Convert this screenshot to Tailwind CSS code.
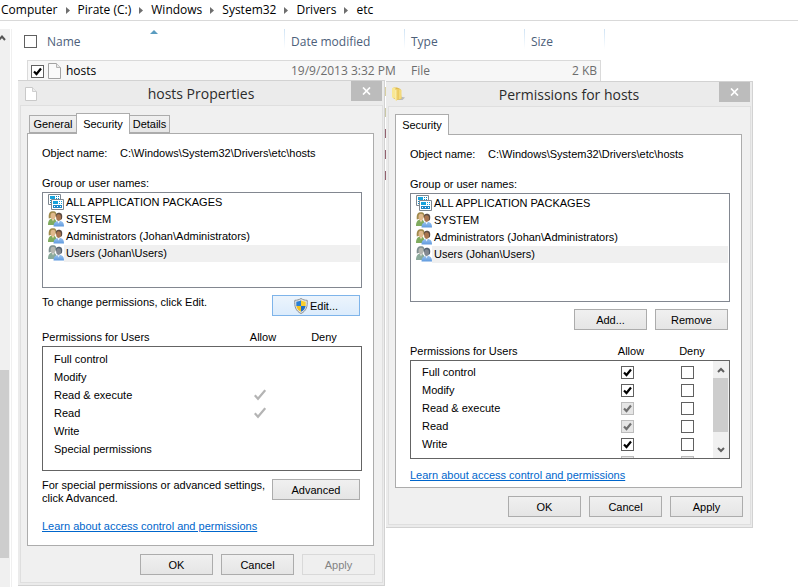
<!DOCTYPE html>
<html lang="en">
<head>
<meta charset="utf-8">
<title>hosts Properties</title>
<script src="https://cdn.jsdelivr.net/npm/@tailwindcss/browser@4"></script>
</head>
<body class="relative flex h-screen flex-col overflow-hidden bg-white font-['Open_Sans',sans-serif] text-xs text-black">

<svg class="absolute size-0" aria-hidden="true">
  <defs>
    <linearGradient id="shirtBlue" x1="0" y1="0" x2="0" y2="1"><stop offset="0" stop-color="#9cc4f0"/><stop offset="1" stop-color="#5f9ade"/></linearGradient>
    <linearGradient id="folderFace" x1="0" y1="0" x2="1" y2="0"><stop offset="0" stop-color="#fdf3b8"/><stop offset="1" stop-color="#e6bf48"/></linearGradient>
    <symbol id="tick" viewBox="0 0 13 13"><path d="M3 6.5 5.5 9 10 3.5" fill="none" stroke="currentColor" stroke-width="2.2"/></symbol>
    <symbol id="tick-plain" viewBox="0 0 12 12"><path d="M.8 6.2 4 9.8 11.2 1.2" fill="none" stroke="currentColor" stroke-width="2.2"/></symbol>
    <symbol id="close" viewBox="0 0 9 8"><path d="M1 .5 8 7.500M8 .5 1 7.500" stroke="#fff" stroke-width="1.7"/></symbol>
    <symbol id="chev-up" viewBox="0 0 8 6"><path d="M1 5 4 2 7 5" fill="none" stroke="#606060" stroke-width="2"/></symbol>
    <symbol id="chev-down" viewBox="0 0 8 6"><path d="M1 1 4 4 7 1" fill="none" stroke="#606060" stroke-width="2"/></symbol>
    <symbol id="crumb" viewBox="0 0 4 7"><path d="M0 0 4 3.500 0 7z" fill="#6e6e6e"/></symbol>
    <symbol id="page" viewBox="0 0 13 16"><path d="M.5.5h8l4 4v11H.5z" fill="#fafafa" stroke="#a2a2a2"/><path d="M8.500.5v4h4" fill="#e8e8e8" stroke="#b4b4b4"/></symbol>
    <symbol id="page-light" viewBox="0 0 12 14"><path d="M.5.5h7l4 4v9H.5z" fill="#fff" stroke="#c9c9c9"/><path d="M7.500.5v4h4" fill="#ececec" stroke="#cfcfcf"/></symbol>
    <symbol id="folder" viewBox="0 0 13 14"><path d="M8 9.500 13 10.500 10.500 13 6 13z" fill="#b9bcc0"/><path d="M1.500.5H5l3.500 1.500L9.500 12 5 13 1 11z" fill="#dfb94a"/><path d="M0 1 3.500.5v11L0 10.500z" fill="#f8e795"/><path d="M3 3 6.500 1.500V12L4 14 3 12.500z" fill="url(#folderFace)"/><path d="M6.500 2 9.500 3V11.500L6.500 12.500z" fill="#f3da7d"/></symbol>
    <symbol id="packages" viewBox="0 0 16 16">
      <path d="M.5.5h12v10H.5z" fill="#fff" stroke="#7e8790"/><path d="M2 2h5v3H2z" fill="#16a3dc"/><path d="M8 2h1v1H8zm2 0h1v1h-1zM8 4h1v1H8zm2 0h1v1h-1zM2 6h1v1H2zm0 2h1v1H2z" fill="#0b86c0"/>
      <path d="M3.500 5.500h12v10h-12z" fill="#fff" stroke="#7e8790"/><path d="M5 7h5v3H5z" fill="#16a3dc"/><path d="M11 7h1v1h-1zm2 0h1v1h-1zm-2 2h1v1h-1zm2 0h1v1h-1z" fill="#16a3dc"/><path d="M5 11h9v3H5z" fill="#1a87c9"/><path d="M6 12h1v1H6zm3 0h1v1H9zm3 0h1v1h-1z" fill="#fff"/>
    </symbol>
    <symbol id="people" viewBox="0 0 16 16">
      <path d="M0 14C0 10 1.500 7.500 4.500 7.500 7 7.500 8.500 9.500 8.500 12l-1 2z" fill="#7fab5e"/><path d="M3.500 7.500 5 10.500 6.500 7.500z" fill="#f0d8b4"/>
      <path d="M.8 7.500C.2 2 2 .3 5 .3s4 2 3.200 5z" fill="#a08a4c"/><ellipse cx="5" cy="5" rx="2.500" ry="3.300" fill="#e0b98c"/>
      <path d="M5.500 15.500C5.500 12 7.500 9.800 11 9.800c3.500 0 5 2.200 5 5.700z" fill="url(#shirtBlue)"/><path d="M9.200 9.800 10.500 12.500 12 9.800z" fill="#eef4fb"/>
      <path d="M8 6C7.300 3 9 1.800 11 1.800c2.700 0 3.700 2.200 3 5.500L13 9z" fill="#5b4a42"/><ellipse cx="10.600" cy="6.600" rx="2.400" ry="3.300" fill="#a8754f"/>
    </symbol>
    <symbol id="people-dim" viewBox="0 0 16 16">
      <path d="M0 14C0 10 1.500 7.500 4.500 7.500 7 7.500 8.500 9.500 8.500 12l-1 2z" fill="#8aaa9a"/><path d="M3.500 7.500 5 10.500 6.500 7.500z" fill="#d8d8d2"/>
      <path d="M.8 7.500C.2 2 2 .3 5 .3s4 2 3.200 5z" fill="#7f9090"/><ellipse cx="5" cy="5" rx="2.500" ry="3.300" fill="#b4b6b0"/>
      <path d="M5.500 15.500C5.500 12 7.500 9.800 11 9.800c3.500 0 5 2.200 5 5.700z" fill="url(#shirtBlue)"/><path d="M9.200 9.800 10.500 12.500 12 9.800z" fill="#dfeaf6"/>
      <path d="M8 6C7.300 3 9 1.800 11 1.800c2.700 0 3.700 2.200 3 5.500L13 9z" fill="#52606f"/><ellipse cx="10.600" cy="6.600" rx="2.400" ry="3.300" fill="#838890"/>
    </symbol>
    <symbol id="shield" viewBox="0 0 14 16">
      <path d="M7 .5C5 1.800 3 2.300.8 2.300.3 8 1.500 13 7 15.500 12.500 13 13.700 8 13.200 2.300 11 2.300 9 1.800 7 .5z" fill="#e3e6e8" stroke="#8b9094"/>
      <path d="M7 2.200C5.500 3.200 4 3.600 2.300 3.700V8H7z" fill="#2a7fd4"/><path d="M7 2.200C8.500 3.200 10 3.600 11.700 3.700V8H7z" fill="#f9cf2d"/>
      <path d="M2.400 8H7v5.800C4.300 12.500 2.800 10.700 2.400 8z" fill="#f5c21b"/><path d="M11.600 8H7v5.800c2.700-1.300 4.200-3.100 4.600-5.800z" fill="#1e6dc4"/>
    </symbol>
  </defs>
</svg>

<nav aria-label="Address" class="flex h-[21px] shrink-0 items-center border-b border-[#d9d9d9] pl-px">
  <a href="#">Computer</a>
  <svg class="mx-2 h-[7px] w-1"><use href="#crumb"/></svg>
  <a href="#">Pirate (C:)</a>
  <svg class="mx-2 h-[7px] w-1"><use href="#crumb"/></svg>
  <a href="#">Windows</a>
  <svg class="mx-2 h-[7px] w-1"><use href="#crumb"/></svg>
  <a href="#">System32</a>
  <svg class="mx-2 h-[7px] w-1"><use href="#crumb"/></svg>
  <a href="#">Drivers</a>
  <svg class="mx-2 h-[7px] w-1"><use href="#crumb"/></svg>
  <a href="#">etc</a>
</nav>

<main class="flex flex-1 pt-2">
  <div class="flex w-[10px] shrink-0 flex-col bg-[#f0f0f0]">
    <svg class="mt-1.5 h-1.5 w-[6px]" viewBox="2 0 6 6"><path d="M1 5 4 1.500 7 5" fill="none" stroke="#555" stroke-width="2"/></svg>
    <div class="mt-[329px] h-[188px] w-[9px] bg-[#cdcdcd]"></div>
  </div>
  <div class="ml-px w-px shrink-0 bg-[#f0f0f0]"></div>
  <div class="pl-3">
    <table class="w-[581px] table-fixed text-left text-[#4c607a]">
      <colgroup><col><col class="w-[120px]"><col class="w-[120px]"><col class="w-[80px]"></colgroup>
      <thead>
        <tr class="h-[31px] align-top">
          <th scope="col" class="relative p-0 font-normal">
            <div class="flex h-[25px] items-center justify-between">
              <label class="flex items-center gap-[10px]"><input type="checkbox" aria-label="Select all" class="size-[13px] appearance-none border border-[#606060] bg-white">Name</label>
              <span class="h-5 w-px self-start bg-gradient-to-b from-[#cfe3f5] to-white"></span>
            </div>
            <svg class="absolute top-px left-[126px] h-[4px] w-[8px]" viewBox="0 0 8 4"><path d="M4 0 8 4H0z" fill="#5a9cc0"/></svg>
          </th>
          <th scope="col" class="p-0 font-normal"><div class="flex h-[25px] items-center justify-between pl-1.5">Date modified<span class="h-5 w-px self-start bg-gradient-to-b from-[#cfe3f5] to-white"></span></div></th>
          <th scope="col" class="p-0 font-normal"><div class="flex h-[25px] items-center justify-between pl-1.5">Type<span class="h-5 w-px self-start bg-gradient-to-b from-[#cfe3f5] to-white"></span></div></th>
          <th scope="col" class="p-0 font-normal"><div class="flex h-[25px] items-center justify-between pl-1.5">Size<span class="h-5 w-px self-start bg-gradient-to-b from-[#cfe3f5] to-white"></span></div></th>
        </tr>
      </thead>
      <tbody>
        <tr class="text-[#6d6d6d]">
          <td class="p-0"><div class="ml-[3px] flex h-[21px] items-center border-t border-l border-[#dadada] bg-[#f7f7f7] pl-[3px] text-black">
            <label class="grid"><input type="checkbox" checked aria-label="Select hosts" class="col-start-1 row-start-1 size-[13px] appearance-none border border-[#606060] bg-white"><svg class="pointer-events-none col-start-1 row-start-1 size-[13px]"><use href="#tick"/></svg></label>
            <svg class="ml-1 h-4 w-[13px]"><use href="#page"/></svg><span class="ml-[5px]">hosts</span></div></td>
          <td class="p-0"><div class="h-[21px] border-t border-[#dadada] bg-[#f7f7f7] pl-1.5 leading-5 whitespace-nowrap">19/9/2013 3:32 PM</div></td>
          <td class="p-0"><div class="h-[21px] border-t border-[#dadada] bg-[#f7f7f7] pl-1.5 leading-5">File</div></td>
          <td class="p-0"><div class="mr-1 h-[21px] border-t border-r border-[#dadada] bg-[#f7f7f7] pr-[3px] text-right leading-5">2 KB</div></td>
        </tr>
      </tbody>
    </table>
  </div>
</main>

<!-- Edges of the file icons that show between the two dialogs -->
<div aria-hidden="true" class="absolute top-[87px] left-[385px] flex w-px flex-col gap-3">
  <i class="h-[9px] bg-[#d8cfa0]"></i><i class="h-[9px] bg-[#c9c7a4]"></i><i class="h-[9px] bg-[#93616f]"></i><i class="h-[9px] bg-[#93616f]"></i><i class="h-[9px] bg-[#93616f]"></i>
</div>

<!-- hosts Properties -->
<section role="dialog" aria-labelledby="t1" class="absolute top-[80px] left-[18px] w-[367px] border-t border-r border-b border-[#d2d2d2] bg-[#ebebeb] pr-px pb-[2px] pl-[2px] font-['Liberation_Sans',Arial,sans-serif] text-[11px] leading-[14px]">
  <header class="grid h-6 grid-cols-[31px_1fr_31px] items-start pr-px">
    <svg class="mt-1.5 ml-[5px] h-[14px] w-3"><use href="#page-light"/></svg>
    <h2 id="t1" class="text-center font-['Open_Sans',sans-serif] text-sm leading-[26px] text-[#2b2b2b]">hosts Properties</h2>
    <button aria-label="Close" class="flex h-5 items-center justify-center bg-[#bcbcbc]"><svg class="h-2 w-[9px]"><use href="#close"/></svg></button>
  </header>
  <div class="border border-[#dfdfdf] bg-[#f0f0f0] pt-[7px] pr-2 pb-[7px] pl-1.5">
    <div role="tablist" class="flex items-end pl-[2px]">
      <button role="tab" class="h-[18px] w-[47px] border border-r-0 border-[#acacac] bg-gradient-to-b from-[#f0f0f0] to-[#e6e6e6]">General</button>
      <button role="tab" aria-selected="true" class="relative z-10 -mb-px h-[21px] w-[54px] border border-b-0 border-[#acacac] bg-white">Security</button>
      <button role="tab" class="h-[18px] w-10 border border-l-0 border-[#acacac] bg-gradient-to-b from-[#f0f0f0] to-[#e6e6e6]">Details</button>
    </div>
    <div class="border border-[#acacac] bg-white pt-3 pr-[11px] pb-3 pl-[14px]">
      <div class="flex"><span class="w-[78px]">Object name:</span><span>C:\Windows\System32\Drivers\etc\hosts</span></div>
      <div id="g1" class="mt-4">Group or user names:</div>
      <ul role="listbox" aria-labelledby="g1" class="mt-[2px] h-24 border border-[#828790] py-px pr-px pl-[5px] leading-[17px]">
        <li role="option" class="flex"><svg class="size-4"><use href="#packages"/></svg><span class="flex-1 pl-[2px]">ALL APPLICATION PACKAGES</span></li>
        <li role="option" class="flex"><svg class="size-4"><use href="#people"/></svg><span class="flex-1 pl-[2px]">SYSTEM</span></li>
        <li role="option" class="flex"><svg class="size-4"><use href="#people"/></svg><span class="flex-1 pl-[2px]">Administrators (Johan\Administrators)</span></li>
        <li role="option" aria-selected="true" class="flex"><svg class="size-4"><use href="#people-dim"/></svg><span class="flex-1 bg-[#f0f0f0] pl-[2px]">Users (Johan\Users)</span></li>
      </ul>
      <div class="mt-[7px] flex items-start justify-between pr-[2px]">
        <span>To change permissions, click Edit.</span>
        <button class="flex h-[21px] w-[88px] items-center justify-center gap-[2px] border border-[#7eb4ea] bg-gradient-to-b from-[#ecf4fc] to-[#dcecfc]"><svg class="h-4 w-[14px]"><use href="#shield"/></svg>Edit...</button>
      </div>
      <div class="mt-[14px] grid grid-cols-[1fr_60px_60px] gap-px pr-2"><span id="p1">Permissions for Users</span><span class="text-center">Allow</span><span class="text-center">Deny</span></div>
      <div class="mt-[2px] h-[125px] border border-[#646464] pt-[3px]">
        <table aria-labelledby="p1" class="w-full table-fixed text-left">
          <colgroup><col class="w-[211px]"><col class="w-[60px]"><col></colgroup>
          <tr class="h-[18px]"><th scope="row" class="p-0 pl-[11px] font-normal">Full control</th><td></td><td></td></tr>
          <tr class="h-[18px]"><th scope="row" class="p-0 pl-[11px] font-normal">Modify</th><td></td><td></td></tr>
          <tr class="h-[18px]"><th scope="row" class="p-0 pl-[11px] font-normal">Read &amp; execute</th><td class="p-0"><svg class="size-3 text-[#b4b4b4]" role="img" aria-label="Allowed"><use href="#tick-plain"/></svg></td><td></td></tr>
          <tr class="h-[18px]"><th scope="row" class="p-0 pl-[11px] font-normal">Read</th><td class="p-0"><svg class="size-3 text-[#b4b4b4]" role="img" aria-label="Allowed"><use href="#tick-plain"/></svg></td><td></td></tr>
          <tr class="h-[18px]"><th scope="row" class="p-0 pl-[11px] font-normal">Write</th><td></td><td></td></tr>
          <tr class="h-[18px]"><th scope="row" class="p-0 pl-[11px] font-normal">Special permissions</th><td></td><td></td></tr>
        </table>
      </div>
      <div class="mt-2 flex items-start justify-between pr-[2px]">
        <p class="leading-[13px]">For special permissions or advanced settings,<br>click Advanced.</p>
        <button class="h-[21px] w-[88px] shrink-0 border border-[#acacac] bg-gradient-to-b from-[#f0f0f0] to-[#e5e5e5]">Advanced</button>
      </div>
      <a href="#" class="mt-[14px] block w-max text-[#0066cc] underline">Learn about access control and permissions</a>
    </div>
    <div class="-mr-px mt-2 flex justify-end gap-2">
      <button class="h-[21px] w-[73px] border border-[#acacac] bg-gradient-to-b from-[#f0f0f0] to-[#e5e5e5]">OK</button>
      <button class="h-[21px] w-[73px] border border-[#acacac] bg-gradient-to-b from-[#f0f0f0] to-[#e5e5e5]">Cancel</button>
      <button disabled class="h-[21px] w-[73px] border border-[#d9d9d9] bg-[#efefef] text-[#838383]">Apply</button>
    </div>
  </div>
</section>

<!-- Permissions for hosts -->
<section role="dialog" aria-labelledby="t2" class="absolute top-[81px] left-[386px] w-[367px] border-t border-r border-b border-[#d2d2d2] bg-[#ebebeb] pr-px pb-[2px] pl-[2px] font-['Liberation_Sans',Arial,sans-serif] text-[11px] leading-[14px]">
  <header class="grid h-6 grid-cols-[31px_1fr_31px] items-start pr-px">
    <svg class="mt-[5px] ml-1 h-[14px] w-[13px]"><use href="#folder"/></svg>
    <h2 id="t2" class="text-center font-['Open_Sans',sans-serif] text-sm leading-[26px] text-[#2b2b2b]">Permissions for hosts</h2>
    <button aria-label="Close" class="flex h-5 items-center justify-center bg-[#bcbcbc]"><svg class="h-2 w-[9px]"><use href="#close"/></svg></button>
  </header>
  <div class="border border-[#dfdfdf] bg-[#f0f0f0] pt-[7px] pr-2 pb-[7px] pl-1.5">
    <div role="tablist" class="flex">
      <button role="tab" aria-selected="true" class="relative z-10 -mb-px h-[21px] w-[54px] border border-b-0 border-[#acacac] bg-white">Security</button>
    </div>
    <div class="border border-[#acacac] bg-white pt-3 pr-[11px] pb-[5px] pl-[14px]">
      <div class="flex"><span class="w-[78px]">Object name:</span><span>C:\Windows\System32\Drivers\etc\hosts</span></div>
      <div id="g2" class="mt-4">Group or user names:</div>
      <ul role="listbox" aria-labelledby="g2" class="mt-[2px] h-[109px] border border-[#828790] py-px pr-px pl-[5px] leading-[17px]">
        <li role="option" class="flex"><svg class="size-4"><use href="#packages"/></svg><span class="flex-1 pl-[2px]">ALL APPLICATION PACKAGES</span></li>
        <li role="option" class="flex"><svg class="size-4"><use href="#people"/></svg><span class="flex-1 pl-[2px]">SYSTEM</span></li>
        <li role="option" class="flex"><svg class="size-4"><use href="#people"/></svg><span class="flex-1 pl-[2px]">Administrators (Johan\Administrators)</span></li>
        <li role="option" aria-selected="true" class="flex"><svg class="size-4"><use href="#people-dim"/></svg><span class="flex-1 bg-[#f0f0f0] pl-[2px]">Users (Johan\Users)</span></li>
      </ul>
      <div class="mt-[7px] flex justify-end gap-2 pr-[2px]">
        <button class="h-[21px] w-[73px] border border-[#acacac] bg-gradient-to-b from-[#f0f0f0] to-[#e5e5e5]">Add...</button>
        <button class="h-[21px] w-[73px] border border-[#acacac] bg-gradient-to-b from-[#f0f0f0] to-[#e5e5e5]">Remove</button>
      </div>
      <div class="mt-[14px] grid grid-cols-[1fr_60px_60px] gap-px pr-2"><span id="p2">Permissions for Users</span><span class="text-center">Allow</span><span class="text-center">Deny</span></div>
      <div class="mt-[2px] flex h-[99px] overflow-hidden border border-[#646464]">
        <div class="flex-1 pt-[2px]">
          <table aria-labelledby="p2" class="w-full table-fixed text-left">
            <colgroup><col class="w-[210px]"><col class="w-[60px]"><col></colgroup>
            <tbody id="perms"></tbody>
          </table>
        </div>
        <div class="flex w-4 shrink-0 flex-col items-center bg-[#f0f0f0] pr-px">
          <svg class="mt-1.5 h-1.5 w-2 shrink-0"><use href="#chev-up"/></svg>
          <div class="mt-[5px] h-[54px] w-full shrink-0 bg-[#cdcdcd]"></div>
          <svg class="mt-[15px] h-1.5 w-2 shrink-0"><use href="#chev-down"/></svg>
        </div>
      </div>
      <a href="#" class="mt-[9px] block w-max text-[#0066cc] underline">Learn about access control and permissions</a>
    </div>
    <div class="-mr-px mt-2 flex justify-end gap-2">
      <button class="h-[21px] w-[73px] border border-[#acacac] bg-gradient-to-b from-[#f0f0f0] to-[#e5e5e5]">OK</button>
      <button class="h-[21px] w-[73px] border border-[#acacac] bg-gradient-to-b from-[#f0f0f0] to-[#e5e5e5]">Cancel</button>
      <button class="h-[21px] w-[73px] border border-[#acacac] bg-gradient-to-b from-[#f0f0f0] to-[#e5e5e5]">Apply</button>
    </div>
  </div>
</section>

<script>
  // name, allow checked, allow disabled, deny disabled; the last row is scrolled out and has no label
  const perms = [
    ['Full control', true, false, false],
    ['Modify', true, false, false],
    ['Read & execute', true, true, false],
    ['Read', true, true, false],
    ['Write', true, false, false],
    ['', false, true, true],
  ];
  const box = (label, on, off) => `<label class="grid w-[13px] ${off ? 'text-[#707070]' : 'text-black'}"><input type="checkbox" aria-label="${label}" ${on ? 'checked' : ''} ${off ? 'disabled' : ''} class="col-start-1 row-start-1 size-[13px] appearance-none border border-[#606060] bg-white disabled:border-[#bcbcbc] disabled:bg-[#e6e6e6]">${on ? '<svg class="pointer-events-none col-start-1 row-start-1 size-[13px]"><use href="#tick"/></svg>' : ''}</label>`;
  document.getElementById('perms').innerHTML = perms.map(([n, on, off, dOff]) => {
    const t = n.replace('&', '&amp;');
    return `<tr class="h-[18px]"><th scope="row" class="p-0 pl-[11px] font-normal">${t}</th><td class="p-0">${box('Allow ' + t, on, off)}</td><td class="p-0">${box('Deny ' + t, false, dOff)}</td></tr>`;
  }).join('');
</script>
</body>
</html>
